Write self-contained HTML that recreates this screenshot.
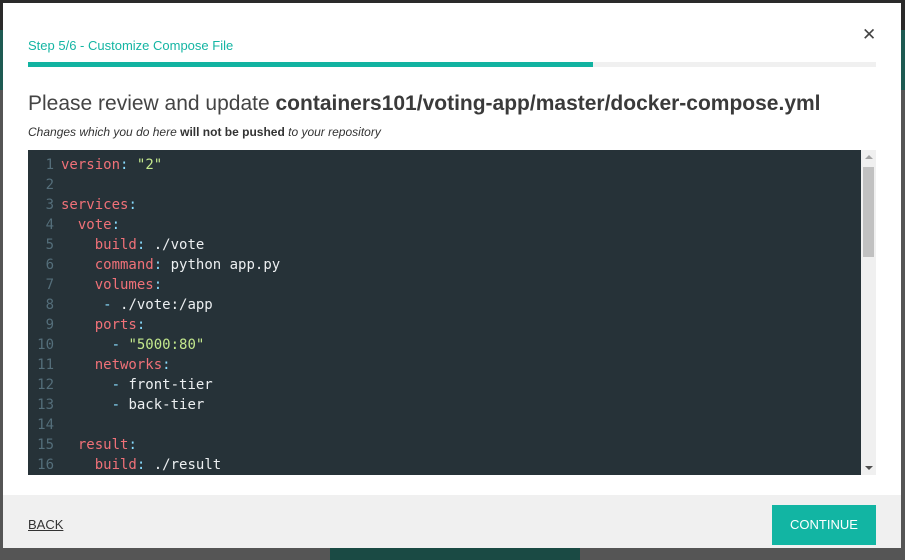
<!DOCTYPE html>
<html><head><style>
body{margin:0;width:905px;height:560px;background:#555;position:relative;overflow:hidden;font-family:"Liberation Sans",sans-serif}
.topbar{position:absolute;left:0;top:0;width:905px;height:30px;background:#2a2a2a}
.teal{position:absolute;left:0;top:30px;width:905px;height:60px;background:#1e5a52}
.bot{position:absolute;left:330px;top:548px;width:250px;height:12px;background:#1a4a44}
.modal{position:absolute;left:3px;top:3px;width:898px;height:545px;background:#fff}
.step{position:absolute;left:25px;top:35px;color:#14b5a3;font-size:13px}
.close{position:absolute;left:859px;top:22px;font-size:17px;color:#444}
.bar{position:absolute;left:25px;top:59px;width:848px;height:5px;background:#f0f0f0}
.bar div{width:565px;height:5px;background:#12b3a1}
h1{position:absolute;left:25px;top:89px;margin:0;font-weight:normal;font-size:21px;color:#444;white-space:nowrap}
h1 b{color:#3a3a3a}
.sub{position:absolute;left:25px;top:122px;font-size:12px;font-style:italic;color:#333}
.sub b{font-style:normal}
.ed{position:absolute;left:25px;top:147px;width:848px;height:325px;background:#263238;overflow:hidden}
pre{margin:0;position:absolute;left:0;top:5px;font-family:"DejaVu Sans Mono",monospace;font-size:14px;line-height:20px;color:#eceff1}
.n{display:inline-block;width:26px;text-align:right;color:#546e7a;margin-right:7px}
.k{color:#f07178}.s{color:#c3e88d}.p{color:#89ddff}
.sb{position:absolute;right:0;top:0;width:15px;height:325px;background:#f0f0f0}
.th{position:absolute;left:2px;top:17px;width:11px;height:90px;background:#c1c1c1}
.au{position:absolute;left:4px;top:5px;width:0;height:0;border-left:4px solid transparent;border-right:4px solid transparent;border-bottom:4px solid #a3a3a3}
.ad{position:absolute;left:4px;bottom:5px;width:0;height:0;border-left:4px solid transparent;border-right:4px solid transparent;border-top:4px solid #505050}
.footer{position:absolute;left:0;top:492px;width:898px;height:53px;background:#f0f0f0}
.back{position:absolute;left:25px;top:22px;font-size:13px;color:#333;text-decoration:underline}
.btn{position:absolute;left:769px;top:10px;width:104px;height:40px;background:#12b5a3;color:#fff;font-size:13px;text-align:center;line-height:40px}
</style></head><body>
<div class="topbar"></div><div class="teal"></div><div class="bot"></div>
<div class="modal">
<div class="step">Step 5/6 - Customize Compose File</div>
<div class="close">✕</div>
<div class="bar"><div></div></div>
<h1>Please review and update <b>containers101/voting-app/master/docker-compose.yml</b></h1>
<div class="sub">Changes which you do here <b>will not be pushed</b> to your repository</div>
<div class="ed"><pre><span class="n">1</span><span class="k">version</span><span class="p">:</span> <span class="s">"2"</span>
<span class="n">2</span>
<span class="n">3</span><span class="k">services</span><span class="p">:</span>
<span class="n">4</span>  <span class="k">vote</span><span class="p">:</span>
<span class="n">5</span>    <span class="k">build</span><span class="p">:</span> ./vote
<span class="n">6</span>    <span class="k">command</span><span class="p">:</span> python app.py
<span class="n">7</span>    <span class="k">volumes</span><span class="p">:</span>
<span class="n">8</span>     <span class="p">-</span> ./vote:/app
<span class="n">9</span>    <span class="k">ports</span><span class="p">:</span>
<span class="n">10</span>      <span class="p">-</span> <span class="s">"5000:80"</span>
<span class="n">11</span>    <span class="k">networks</span><span class="p">:</span>
<span class="n">12</span>      <span class="p">-</span> front-tier
<span class="n">13</span>      <span class="p">-</span> back-tier
<span class="n">14</span>
<span class="n">15</span>  <span class="k">result</span><span class="p">:</span>
<span class="n">16</span>    <span class="k">build</span><span class="p">:</span> ./result</pre>
<div class="sb"><div class="au"></div><div class="th"></div><div class="ad"></div></div></div>
<div class="footer"><div class="back">BACK</div><div class="btn">CONTINUE</div></div>
</div>
</body></html>
